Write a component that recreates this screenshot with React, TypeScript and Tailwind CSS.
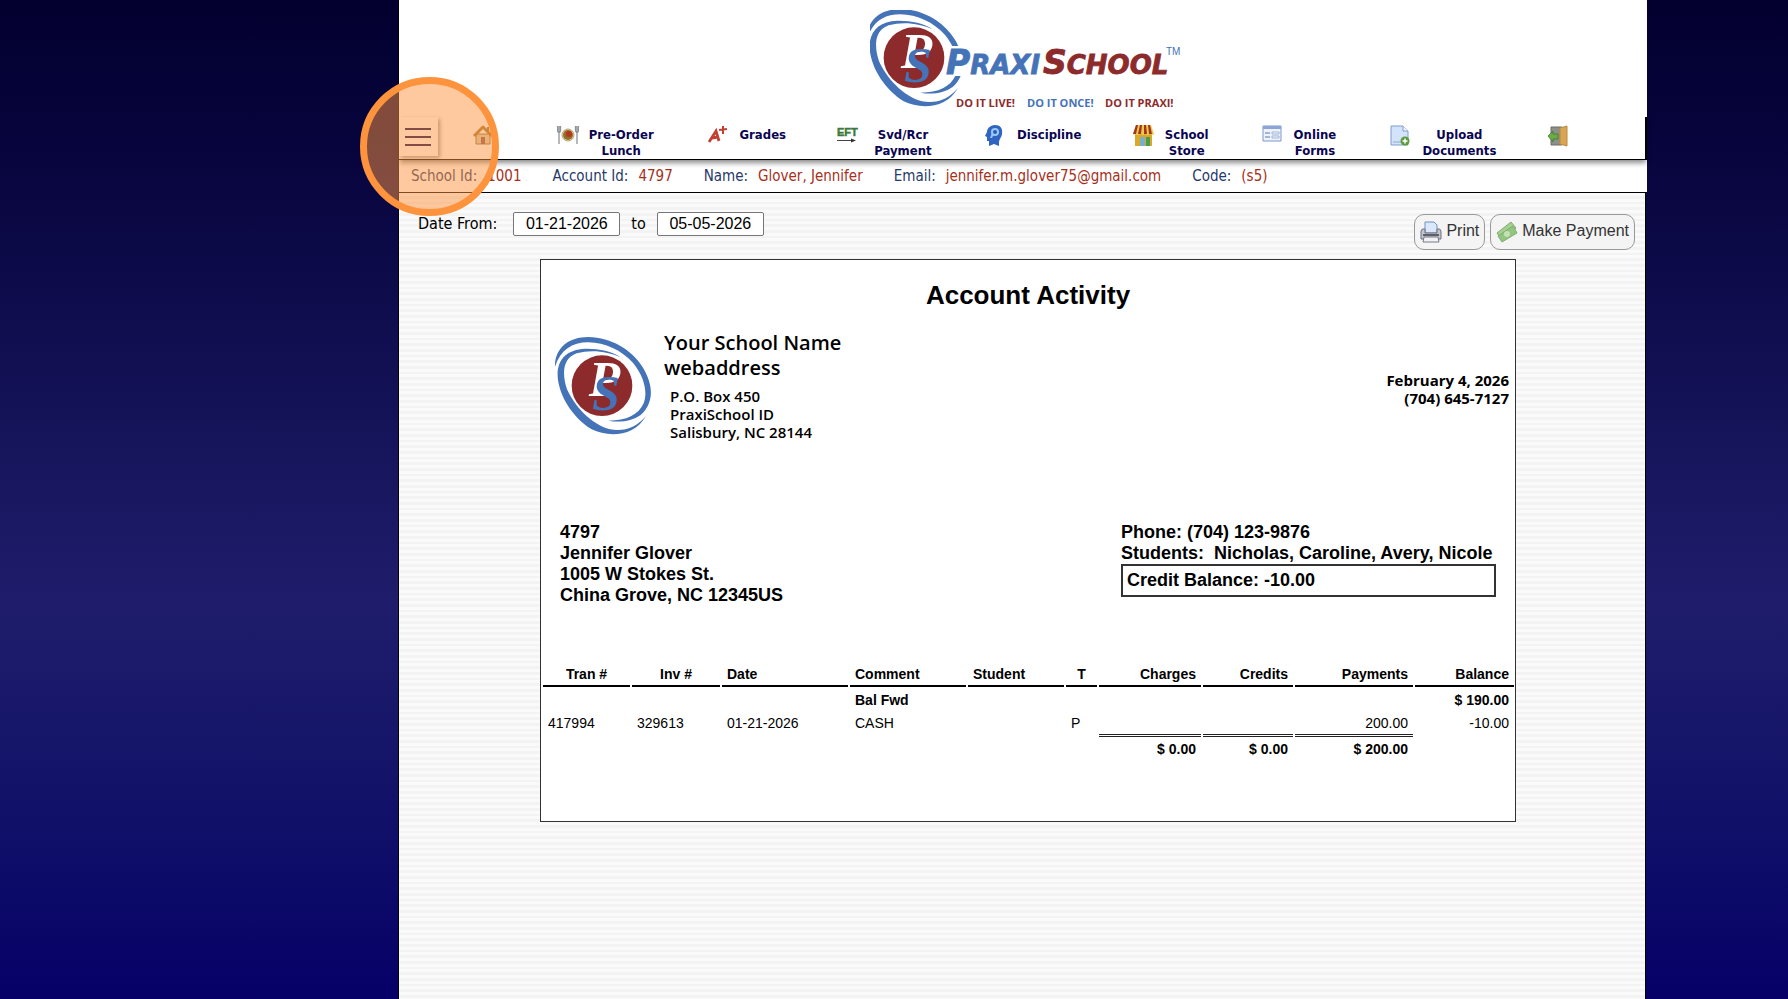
import type { ReactNode } from "react";

const navItems: { label: string[]; icon: ReactNode }[] = [
  { label: ["Pre-Order", "Lunch"], icon: <LunchIcon /> },
  { label: ["Grades"], icon: <GradesIcon /> },
  { label: ["Svd/Rcr", "Payment"], icon: <EftIcon /> },
  { label: ["Discipline"], icon: <DisciplineIcon /> },
  { label: ["School", "Store"], icon: <StoreIcon /> },
  { label: ["Online", "Forms"], icon: <FormsIcon /> },
  { label: ["Upload", "Documents"], icon: <UploadIcon /> },
];

const accountInfo = [
  { label: "School Id:", value: "1001" },
  { label: "Account Id:", value: "4797" },
  { label: "Name:", value: "Glover, Jennifer" },
  { label: "Email:", value: "jennifer.m.glover75@gmail.com" },
  { label: "Code:", value: "(s5)" },
];

function PSMark() {
  return (
    <g>
      <path
        fill="#4573b8"
        d="M75 350C74 295 115 261 175 261C245 262 305 300 337 350C372 405 372 460 332 495C305 514 270 518 235 512C290 512 325 495 341 460C354 425 342 380 310 340C275 300 225 278 175 277C125 277 92 300 75 350Z"
      />
      <path
        fill="#4573b8"
        d="M272 322C245 303 205 295 165 296C110 298 80 330 83 380C87 435 125 500 185 538C235 563 315 560 348 497C320 532 285 545 240 538C185 525 130 465 110 415C96 370 98 325 140 310C185 297 235 305 272 322Z"
      />
      <circle cx="216" cy="407" r="91" fill="#8c2a2c" />
      <text x="176" y="437" fill="#fff" fontFamily="Liberation Serif, serif" fontSize="154" fontStyle="italic" fontWeight="700">
        P
      </text>
      <text
        x="186"
        y="480"
        fill="#4573b8"
        fontFamily="Liberation Serif, serif"
        fontSize="150"
        fontStyle="italic"
        fontWeight="700"
      >
        S
      </text>
    </g>
  );
}

function HeaderLogo() {
  return (
    <svg width="316" height="100" viewBox="870 10 316 100" role="img" aria-label="PraxiSchool">
      <g transform="translate(842 -78) scale(0.3333)">
        <PSMark />
      </g>
      <path d="M951 46H965V76H944Z" fill="#fff" />
      <g fontFamily="DejaVu Sans, sans-serif" fontStyle="italic" fontWeight="700" fontSize="26" strokeWidth="0.8">
        <text x="946" y="74" fill="#4573b8" stroke="#4573b8">
          <tspan fontSize="33">P</tspan>RAXI
        </text>
        <text x="1043" y="74" fill="#8c2a2c" stroke="#8c2a2c">
          <tspan fontSize="33">S</tspan>CHOOL
        </text>
      </g>
      <text x="1166" y="55" fill="#4573b8" fontFamily="Liberation Sans, sans-serif" fontSize="10">
        TM
      </text>
      <g fontFamily="Open Sans, sans-serif" fontWeight="700" fontSize="11">
        <text x="956" y="107" fill="#8c2a2c">
          DO IT LIVE!
        </text>
        <text x="1027" y="107" fill="#4573b8">
          DO IT ONCE!
        </text>
        <text x="1105" y="107" fill="#8c2a2c">
          DO IT PRAXI!
        </text>
      </g>
    </svg>
  );
}

function HomeIcon() {
  return (
    <svg width="20" height="20" viewBox="0 0 20 20">
      <path d="M3 9H17V19H3Z" fill="#d8cfae" stroke="#8a7a48" />
      <path d="M1 11L10 2L19 11" fill="none" stroke="#a97a2e" strokeWidth="3" strokeLinejoin="round" />
      <path d="M8 12H12V19H8Z" fill="#8b5a5a" />
      <path d="M14 2H16V6H14Z" fill="#8a7a48" />
    </svg>
  );
}

function LunchIcon() {
  return (
    <svg width="22" height="20" viewBox="0 0 22 20">
      <circle cx="11" cy="10" r="6" fill="#e6d9a8" stroke="#b3a67a" />
      <circle cx="11" cy="10" r="5" fill="#9c6a2a" />
      <circle cx="12" cy="9" r="3" fill="#b3361f" />
      <path d="M8 11L11 13L8 14Z" fill="#5c8a2e" />
      <path d="M0.5 1V6Q2 9 3.5 6V1M2 1V19" fill="none" stroke="#8e9499" strokeWidth="1.3" />
      <path d="M18.5 1V6Q20 9 21.5 6V1M20 1V19" fill="none" stroke="#8e9499" strokeWidth="1.3" />
    </svg>
  );
}

function GradesIcon() {
  return (
    <svg width="22" height="20" viewBox="0 0 22 20" fill="none" stroke="#c2402f">
      <path d="M1 17L8 6L11 16M4 13L10 12" strokeWidth="2.8" />
      <path d="M15 1V9M11 5L19 4" strokeWidth="2" />
    </svg>
  );
}

function EftIcon() {
  return (
    <svg width="27" height="20" viewBox="0 0 27 20">
      <text
        x="0"
        y="11"
        fill="#3c7a3a"
        stroke="#3c7a3a"
        strokeWidth="0.5"
        fontFamily="Liberation Sans, sans-serif"
        fontWeight="700"
        fontSize="11"
      >
        EFT
      </text>
      <path d="M0 15.5H15" stroke="#444" />
      <path d="M14 13.5L19 15.5L14 17.5Z" fill="#333" />
    </svg>
  );
}

function DisciplineIcon() {
  return (
    <svg width="22" height="22" viewBox="0 0 22 22">
      <path d="M4 21V16H2V12L0 11L2 7C2 3 6 0 10 0C15 0 18 3 17 9C17 12 14 14 14 17L14 21L9 19Z" fill="#2f64c0" />
      <circle cx="10" cy="7" r="4" fill="#9cc8f5" />
      <circle cx="10" cy="7" r="2" fill="#2a5bb5" />
      <path d="M9 9L7 13H5L7 8Z" fill="#9cc8f5" />
    </svg>
  );
}

function StoreIcon() {
  return (
    <svg width="22" height="22" viewBox="0 0 22 22">
      <path d="M2 9H19V21H2Z" fill="#d9a927" />
      <path d="M7 12H12V21H7Z" fill="#76b0cf" />
      <path d="M13 12H17V21H13Z" fill="#4f9a4c" />
      <path d="M3 0H18L21 9Q19 11 17 9Q14 11 12 9Q10 11 8 9Q5 11 0 9Z" fill="#f2c84b" />
      <path d="M3 0H5L3 9H0ZM7 0H9L8 9H5ZM11 0H13L14 9H11ZM15 0H17L19 9H16Z" fill="#a03520" />
    </svg>
  );
}

function FormsIcon() {
  return (
    <svg width="22" height="18" viewBox="0 0 22 18">
      <path d="M1 1H19V16H1Z" fill="#eef3fb" stroke="#7d96c8" />
      <path d="M1 1H19V4H1Z" fill="#8ba5d6" />
      <path d="M3 8H8M3 12H8" stroke="#5877b5" />
      <path d="M10 7H17V9H10ZM10 11H17V13H10Z" fill="#fff" stroke="#9db1d8" />
    </svg>
  );
}

function UploadIcon() {
  return (
    <svg width="22" height="22" viewBox="0 0 22 22">
      <path d="M1 1H13L18 6V20H1Z" fill="#d3e3fa" stroke="#7f9ed2" />
      <path d="M13 1V6H18" fill="#f4f8ff" stroke="#7f9ed2" />
      <path d="M3 17H12" stroke="#8fabd9" />
      <circle cx="15" cy="16" r="4.5" fill="#5f9a3c" />
      <path d="M15 13.5V18.5M12.5 16H17.5" stroke="#fff" strokeWidth="1.5" />
    </svg>
  );
}

function ExitIcon() {
  return (
    <svg width="20" height="22" viewBox="0 0 20 22">
      <path d="M3 2H14V20H3Z" fill="#8b9088" stroke="#6a6f67" />
      <path d="M12 3L19 1V21L12 19Z" fill="#d9a552" stroke="#b98a40" />
      <path d="M0 11L5 6V9H10V14H5V17Z" fill="#6cab48" stroke="#3d7a2a" strokeWidth="0.8" />
    </svg>
  );
}

function PrinterIcon() {
  return (
    <svg width="22" height="22" viewBox="0 0 22 22">
      <path d="M5 1H14L17 4V12H5Z" fill="#dbe8fb" stroke="#6f8fc9" />
      <path d="M1 11Q1 8 3 8H5V12H17V8H19Q21 8 21 11V18H1Z" fill="#c3c6cd" stroke="#6d717b" />
      <path d="M3 13H19V15H3Z" fill="#5d616c" />
      <path d="M4 16H18L19 21H3Z" fill="#f1f2f5" stroke="#777b86" />
    </svg>
  );
}

function MoneyIcon() {
  return (
    <svg width="22" height="22" viewBox="0 0 22 22">
      <path d="M1 12L15 1L20 7L6 19Z" fill="#a5cf93" stroke="#7fae6e" />
      <path d="M2 15L17 5L21 12L6 21Z" fill="#93c580" stroke="#7fae6e" />
      <circle cx="11" cy="13" r="3" fill="#c4e0b6" />
    </svg>
  );
}

function Header() {
  return (
    <header className="bg-white">
      <div className="flex h-[117px] justify-center pt-[10px] pl-[10px]">
        <HeaderLogo />
      </div>
      <nav className="grid h-[43px] grid-cols-[74fr_84fr_151fr_130fr_148fr_148fr_129fr_129fr_158fr_97fr] border-r-2 border-b border-black bg-white shadow-[0_4px_5px_-1px_rgba(0,0,0,0.45)]">
        <button
          aria-label="Menu"
          className="flex h-[39px] w-[39px] flex-col items-center justify-center gap-[6px] pr-[2px] shadow-[2px_2px_4px_rgba(0,0,0,0.4)]"
        >
          <span className="h-[2px] w-[26px] bg-[#0a0550]" />
          <span className="h-[2px] w-[26px] bg-[#0a0550]" />
          <span className="h-[2px] w-[26px] bg-[#0a0550]" />
        </button>
        <a href="#home" aria-label="Home" className="pt-2">
          <HomeIcon />
        </a>
        {navItems.map((item) => (
          <a
            key={item.label[0]}
            href={`#${item.label[0].toLowerCase()}`}
            className="flex items-start gap-[10px] pt-2 font-['DejaVu_Sans_Condensed','Noto_Sans',sans-serif] text-[13px] leading-4 font-bold text-[#0a0550]"
          >
            {item.icon}
            <span className="flex flex-col pt-[2px] text-center">
              {item.label.map((line) => (
                <span key={line}>{line}</span>
              ))}
            </span>
          </a>
        ))}
        <a href="#logout" aria-label="Log out" className="pt-2">
          <ExitIcon />
        </a>
      </nav>
      <div className="flex h-[33px] items-center gap-[31px] border-b border-black pl-3 font-['DejaVu_Sans_Condensed','Noto_Sans',sans-serif] text-[15px]">
        {accountInfo.map((info) => (
          <p key={info.label} className="flex gap-[10px] whitespace-nowrap">
            <span className="text-[#26396a]">{info.label}</span>
            <span className="text-[#a5301c]">{info.value}</span>
          </p>
        ))}
      </div>
    </header>
  );
}

function Toolbar() {
  return (
    <div className="flex items-start justify-between pt-[19px] pr-[10px] pl-[19px]">
      <form className="flex h-6 items-center font-['DejaVu_Sans_Condensed','Noto_Sans',sans-serif] text-[16px] text-black">
        <label htmlFor="date-from" className="mr-4">
          Date From:
        </label>
        <input
          id="date-from"
          defaultValue="01-21-2026"
          className="h-6 w-[107px] rounded-xs border border-[#767676] bg-white text-center font-['Liberation_Sans',sans-serif]"
        />
        <label htmlFor="date-to" className="mx-[11px]">
          to
        </label>
        <input
          id="date-to"
          defaultValue="05-05-2026"
          className="h-6 w-[107px] rounded-xs border border-[#767676] bg-white text-center font-['Liberation_Sans',sans-serif]"
        />
      </form>
      <div className="mt-[2px] flex gap-[5px] font-['Liberation_Sans',sans-serif] text-[16px] leading-5 text-[#333]">
        <button className="flex h-9 items-start gap-1 rounded-[10px] border border-[#999] bg-[#f4f4f4] px-[5px] pt-[6px]">
          <PrinterIcon />
          Print
        </button>
        <button className="flex h-9 items-start gap-1 rounded-[10px] border border-[#999] bg-[#f4f4f4] px-[5px] pt-[6px]">
          <MoneyIcon />
          Make Payment
        </button>
      </div>
    </div>
  );
}

const columns = [
  { name: "Tran #", width: "w-[87px]", align: "text-center" },
  { name: "Inv #", width: "w-[88px]", align: "text-center" },
  { name: "Date", width: "w-[126px]", align: "text-left" },
  { name: "Comment", width: "w-[116px]", align: "text-left" },
  { name: "Student", width: "w-[96px]", align: "text-left" },
  { name: "T", width: "w-[31px]", align: "text-center" },
  { name: "Charges", width: "w-[102px]", align: "text-right" },
  { name: "Credits", width: "w-[90px]", align: "text-right" },
  { name: "Payments", width: "w-[118px]", align: "text-right" },
  { name: "Balance", width: "w-[99px]", align: "text-right" },
];

function ActivityTable() {
  return (
    <table className="w-full table-fixed border-separate border-spacing-x-[2px] border-spacing-y-0 text-[14px] leading-4">
      <thead>
        <tr>
          {columns.map((col) => (
            <th key={col.name} className={`h-[22px] border-b-2 border-black px-[5px] pb-[2px] ${col.width} ${col.align}`}>
              {col.name}
            </th>
          ))}
        </tr>
      </thead>
      <tbody>
        <tr className="h-[25px] font-bold">
          <td colSpan={3} />
          <td className="px-[5px]">Bal Fwd</td>
          <td colSpan={5} />
          <td className="px-[5px] text-right">$ 190.00</td>
        </tr>
        <tr className="h-[22px]">
          <td className="px-[5px]">417994</td>
          <td className="px-[5px]">329613</td>
          <td className="px-[5px]">01-21-2026</td>
          <td className="px-[5px]">CASH</td>
          <td />
          <td className="px-[5px]">P</td>
          <td />
          <td />
          <td className="px-[5px] text-right">200.00</td>
          <td className="px-[5px] text-right">-10.00</td>
        </tr>
        <tr className="font-bold">
          <td colSpan={6} />
          <td className="h-[27px] border-t-3 border-double border-[#222] px-[5px] text-right">$ 0.00</td>
          <td className="border-t-3 border-double border-[#222] px-[5px] text-right">$ 0.00</td>
          <td className="border-t-3 border-double border-[#222] px-[5px] text-right">$ 200.00</td>
          <td />
        </tr>
      </tbody>
    </table>
  );
}

function Report() {
  return (
    <main className="mt-[9px] mr-[129px] ml-[141px] border border-[#333] bg-white pb-[60px] font-['Liberation_Sans',sans-serif] text-black">
      <h1 className="pt-[19px] text-center text-[26px] leading-8 font-bold">Account Activity</h1>
      <div className="flex items-start justify-between pt-[19px] pr-[6px] pl-[14px] font-['Open_Sans',sans-serif] font-semibold">
        <div className="flex">
          <svg width="98" height="100" viewBox="75 258 294 300" className="mt-[6px]" role="img" aria-label="School logo">
            <PSMark />
          </svg>
          <div className="ml-[11px]">
            <p className="text-[20px] leading-[25px]">Your School Name</p>
            <p className="text-[20px] leading-[25px]">webaddress</p>
            <address className="mt-[7px] ml-[6px] text-[15px] leading-[18px] not-italic">
              P.O. Box 450
              <br />
              PraxiSchool ID
              <br />
              Salisbury, NC 28144
            </address>
          </div>
        </div>
        <p className="mt-[41px] text-right text-[15px] leading-[18px] font-bold">
          February 4, 2026
          <br />
          (704) 645-7127
        </p>
      </div>
      <div className="flex items-start justify-between pt-[81px] pr-[19px] pl-[19px] text-[18px] leading-[21px] font-bold">
        <address className="not-italic">
          4797
          <br />
          Jennifer Glover
          <br />
          1005 W Stokes St.
          <br />
          China Grove, NC 12345US
        </address>
        <div className="min-w-[375px]">
          <p>Phone: (704) 123-9876</p>
          <p>Students:&nbsp; Nicholas, Caroline, Avery, Nicole</p>
          <p className="border-2 border-[#333] px-1 py-[4px]">Credit Balance: -10.00</p>
        </div>
      </div>
      <div className="pt-[59px]">
        <ActivityTable />
      </div>
    </main>
  );
}

export default function App() {
  return (
    <div className="relative min-h-screen overflow-hidden bg-linear-to-b from-[#03002f] via-[#1f1d6b] via-60% to-[#060067] pr-[141px] pl-[398px]">
      <div className="flex min-h-screen flex-col border-l border-black">
        <Header />
        <div className="mr-[1px] flex-1 border-r border-black bg-[repeating-linear-gradient(#fafafa_0_3px,#f3f3f3_3px_6px,#fafafa_6px_9px,#f3f3f3_9px_11px,#fafafa_11px_14px,#f3f3f3_14px_17px)]">
          <Toolbar />
          <Report />
        </div>
      </div>
      {/* click highlight over the menu button */}
      <div className="pointer-events-none absolute top-[77px] left-[360px] h-[139px] w-[139px] rounded-full border-7 border-[#fd933d] bg-[#fd933d]/50" />
    </div>
  );
}
